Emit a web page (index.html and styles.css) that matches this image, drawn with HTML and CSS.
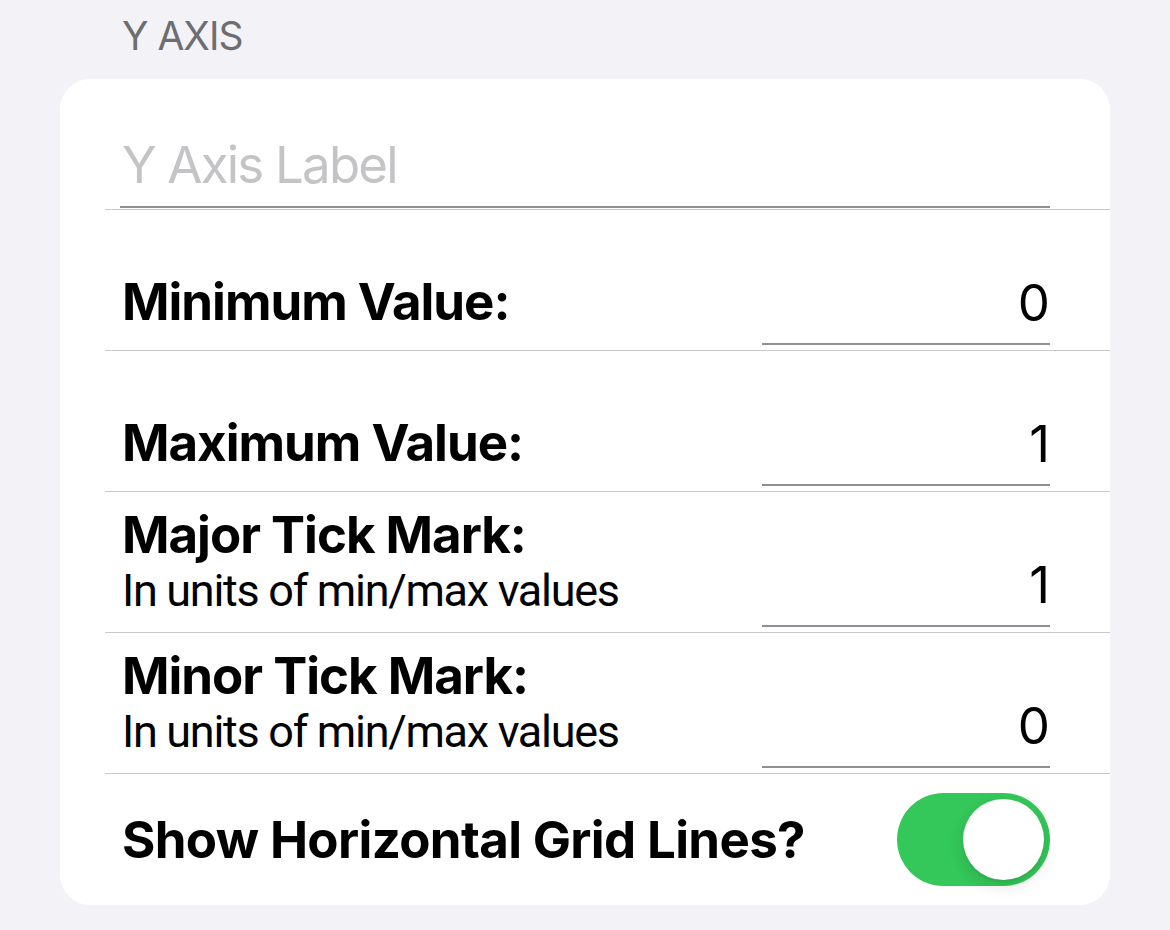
FILE: index.html
```html
<!DOCTYPE html>
<html>
<head>
<meta charset="utf-8">
<link rel="stylesheet" href="styles.css">
</head>
<body>
<div class="page">
  <div class="section-header">Y AXIS</div>
  <div class="card">
    <div class="row row-text">
      <div class="text-field">Y Axis Label</div>
    </div>
    <div class="row row-field">
      <div class="label"><div class="title">Minimum Value:</div></div>
      <div class="num-field">0</div>
    </div>
    <div class="row row-field">
      <div class="label"><div class="title">Maximum Value:</div></div>
      <div class="num-field">1</div>
    </div>
    <div class="row row-field">
      <div class="label label-two"><div class="title">Major Tick Mark:</div><div class="sub">In units of min/max values</div></div>
      <div class="num-field">1</div>
    </div>
    <div class="row row-field">
      <div class="label label-two"><div class="title">Minor Tick Mark:</div><div class="sub">In units of min/max values</div></div>
      <div class="num-field">0</div>
    </div>
    <div class="row row-toggle">
      <div class="label"><div class="title title-long">Show Horizontal Grid Lines?</div></div>
      <div class="toggle"><div class="knob"></div></div>
    </div>
  </div>
</div>
</body>
</html>
```
FILE: styles.css
```css
html, body {
  margin: 0;
  padding: 0;
}
body {
  background: #f2f2f7;
  font-family: Inter, "Noto Sans", sans-serif;
  color: #000;
  width: 1170px;
  height: 930px;
  overflow: hidden;
}
.page {
  padding: 0 60px;
}
.section-header {
  height: 79px;
  box-sizing: border-box;
  padding: 16px 0 0 62px;
  font-size: 39px;
  line-height: 40px;
  letter-spacing: -1px;
  color: #6d6d72;
}
.card {
  background: #fff;
  border-radius: 30px;
  overflow: hidden;
  padding-left: 45px;
}
.row {
  display: flex;
  border-bottom: 1px solid #c8c8cc;
  padding-left: 17px;
  padding-right: 60px;
  box-sizing: border-box;
}
.row-text {
  height: 131px;
  align-items: flex-end;
  padding-left: 15px;
  padding-bottom: 1px;
}
.text-field {
  flex: 1;
  font-size: 51px;
  line-height: 60px;
  letter-spacing: -1.8px;
  color: #c4c4c7;
  padding-left: 2px;
  padding-bottom: 11px;
  border-bottom: 2px solid #8e8e93;
}
.row-field {
  height: 141px;
  align-items: flex-end;
  justify-content: space-between;
  padding-bottom: 5px;
}
.label {
  padding-bottom: 13px;
}
.label-two {
  padding-bottom: 10px;
}
.title {
  font-size: 51px;
  font-weight: 700;
  line-height: 60px;
  letter-spacing: -1px;
}
.title-long {
  letter-spacing: -0.65px;
}
.sub {
  font-family: Roboto, Inter, sans-serif;
  font-size: 45px;
  line-height: 52px;
  letter-spacing: -1.3px;
}
.num-field {
  width: 288px;
  text-align: right;
  font-size: 51px;
  line-height: 60px;
  padding-bottom: 10px;
  border-bottom: 2px solid #8e8e93;
}
.row-toggle {
  height: 131px;
  border-bottom: none;
  align-items: center;
  justify-content: space-between;
}
.row-toggle .label {
  padding-bottom: 0;
}
.toggle {
  position: relative;
  width: 153px;
  height: 93px;
  border-radius: 47px;
  background: #34c759;
}
.knob {
  position: absolute;
  top: 6px;
  right: 6px;
  width: 81px;
  height: 81px;
  border-radius: 50%;
  background: #fff;
  box-shadow: 0 6px 16px rgba(0,0,0,0.12), 0 2px 2px rgba(0,0,0,0.06);
}
```
